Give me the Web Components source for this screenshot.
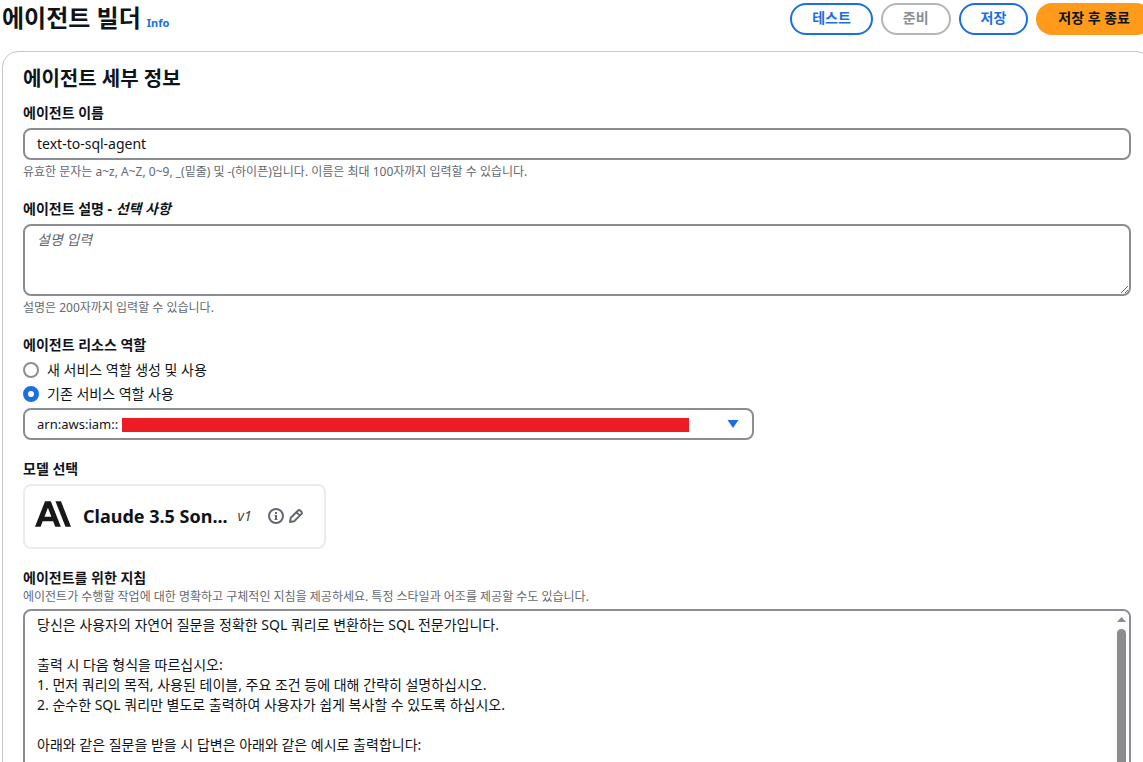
<!DOCTYPE html>
<html lang="ko">
<head>
  <meta charset="UTF-8">
  <meta name="viewport" content="width=device-width, initial-scale=1.0">
  <title>에이전트 빌더</title>
  <style>
    :root {
      --text: #0f141a;
      --muted: #656871;
      --border: #8c8c94;
      --divider: #c6c6cd;
      --primary: #1b6fe0;
      --accent: #ff9a1a;
    }

    body {
      margin: 0;
      height: 100vh;
      overflow: hidden;
      color: var(--text);
      background-color: #fff;
      font-family: "Noto Sans", "Noto Sans CJK KR", sans-serif;
      font-size: 14px;
      line-height: 20px;
    }
  </style>
</head>
<body>
  <agent-builder>
    <page-header slot="header" heading="에이전트 빌더">
      <action-button>테스트</action-button>
      <action-button variant="disabled">준비</action-button>
      <action-button>저장</action-button>
      <action-button variant="primary">저장 후 종료</action-button>
    </page-header>

    <details-panel heading="에이전트 세부 정보">
      <text-field
        label="에이전트 이름"
        value="text-to-sql-agent"
        hint="유효한 문자는 a~z, A~Z, 0~9, _(밑줄) 및 -(하이픈)입니다. 이름은 최대 100자까지 입력할 수 있습니다."
      ></text-field>
      <area-field
        label="에이전트 설명"
        optional="선택 사항"
        placeholder="설명 입력"
        hint="설명은 200자까지 입력할 수 있습니다."
      ></area-field>
      <role-field></role-field>
      <model-card heading="모델 선택" name="Claude 3.5 Son..." version="v1"></model-card>
      <instructions-field
        label="에이전트를 위한 지침"
        hint="에이전트가 수행할 작업에 대한 명확하고 구체적인 지침을 제공하세요. 특정 스타일과 어조를 제공할 수도 있습니다."
      ></instructions-field>
    </details-panel>
  </agent-builder>

  <script>
    // Clase base: cada componente solo define su template y sus estilos
    class BaseElement extends HTMLElement {
      constructor() {
        super();
        this.attachShadow({ mode: "open" });
      }

      getBaseStyles() {
        return `
          :host { display: block; }
          * { box-sizing: border-box; }
          button, input, textarea, select { font: inherit; color: inherit; margin: 0; }
          h1, h2, p, fieldset { margin: 0; padding: 0; border: 0; }
          .label { display: block; padding: 0 0 2px; line-height: 18px; font-weight: 700; }
          .hint { font-size: 12px; line-height: 16px; color: var(--muted); }
          .control {
            display: block;
            width: 100%;
            padding: 4px 12px;
            border: 2px solid var(--border);
            border-radius: 8px;
            background-color: #fff;
            outline: none;
          }
        `;
      }

      getStyles() {
        return "";
      }

      render() {
        const template = document.createElement("template");
        template.innerHTML = `
          <style>${this.getBaseStyles()}${this.getStyles()}</style>
          ${this.getTemplate()}
        `;
        this.shadowRoot.replaceChildren(template.content.cloneNode(true));
      }

      connectedCallback() {
        this.render();
      }
    }

    class AgentBuilder extends BaseElement {
      getTemplate() {
        return `
          <slot name="header"></slot>
          <main><slot></slot></main>
        `;
      }

      // La página sobresale un poco por la derecha de la ventana
      getStyles() {
        return `
          :host { margin: 0 -9px 0 2px; }
          main { margin-top: 16px; }
        `;
      }
    }

    class PageHeader extends BaseElement {
      getTemplate() {
        return `
          <header>
            <h1>${this.getAttribute("heading")}</h1>
            <a href="#info">Info</a>
            <div class="actions"><slot></slot></div>
          </header>
        `;
      }

      getStyles() {
        return `
          header { display: flex; align-items: baseline; padding-top: 3px; }
          h1 { font-size: 24px; line-height: 30px; font-weight: 700; }
          a {
            margin-left: 6px;
            font-size: 11px;
            line-height: 16px;
            font-weight: 700;
            color: var(--primary);
            text-decoration: none;
          }
          .actions { display: flex; align-self: flex-start; gap: 8px; margin-left: auto; }
        `;
      }
    }

    class ActionButton extends BaseElement {
      getTemplate() {
        const variant = this.getAttribute("variant") || "normal";
        return `
          <button type="button" class="${variant}" ${variant === "disabled" ? "disabled" : ""}>
            <slot></slot>
          </button>
        `;
      }

      getStyles() {
        return `
          button {
            display: block;
            height: 32px;
            padding: 3px 20px 5px;
            border: 2px solid currentColor;
            border-radius: 20px;
            background-color: #fff;
            color: var(--primary);
            font-weight: 700;
            white-space: nowrap;
          }
          .disabled { color: var(--border); border-color: #b4b4bb; }
          .primary { color: var(--text); background-color: var(--accent); border-color: var(--accent); }
        `;
      }
    }

    class DetailsPanel extends BaseElement {
      getTemplate() {
        return `
          <section>
            <h2>${this.getAttribute("heading")}</h2>
            <div class="fields"><slot></slot></div>
          </section>
        `;
      }

      getStyles() {
        return `
          section {
            padding: 14px 20px 20px;
            border: 1px solid var(--divider);
            border-radius: 16px;
          }
          h2 { font-size: 20px; line-height: 26px; font-weight: 700; }
          .fields { display: flex; flex-direction: column; gap: 20px; margin-top: 12px; }
        `;
      }
    }

    class TextField extends BaseElement {
      getTemplate() {
        return `
          <label class="label" for="field">${this.getAttribute("label")}</label>
          <input class="control" id="field" type="text" value="${this.getAttribute("value")}">
          <p class="hint">${this.getAttribute("hint")}</p>
        `;
      }

      getStyles() {
        return `
          .control { height: 32px; margin: 4px 0; padding: 3px 12px 5px; }
        `;
      }
    }

    class AreaField extends BaseElement {
      getTemplate() {
        return `
          <label class="label" for="field">${this.getAttribute("label")} - <i>${this.getAttribute("optional")}</i></label>
          <textarea class="control" id="field" rows="3" placeholder="${this.getAttribute("placeholder")}"></textarea>
          <p class="hint">${this.getAttribute("hint")}</p>
        `;
      }

      getStyles() {
        return `
          .control { margin: 4px 0; resize: vertical; }
          .control::placeholder { color: var(--muted); font-style: italic; opacity: 1; }
        `;
      }
    }

    class RoleField extends BaseElement {
      getTemplate() {
        return `
          <fieldset>
            <legend class="label">에이전트 리소스 역할</legend>
            <div class="options">
              <label><input type="radio" name="role" value="new">새 서비스 역할 생성 및 사용</label>
              <label><input type="radio" name="role" value="existing" checked>기존 서비스 역할 사용</label>
            </div>
            <div class="select">
              <select class="control" aria-label="에이전트 리소스 역할">
                <option>arn:aws:iam::</option>
              </select>
              <svg width="12" height="8" viewBox="0 0 12 8"><path d="M0.5 0h11L6 8z" fill="currentColor"/></svg>
              <span class="mask"></span>
            </div>
          </fieldset>
        `;
      }

      getStyles() {
        return `
          .options { display: flex; flex-direction: column; gap: 4px; margin: 4px 0; }
          .options label { display: flex; align-items: center; gap: 8px; }
          input {
            appearance: none;
            width: 16px;
            height: 16px;
            border: 2px solid var(--border);
            border-radius: 50%;
          }
          input:checked { border: 5px solid var(--primary); }
          .select { position: relative; width: 66%; }
          select { appearance: none; height: 32px; font-size: 13px; }
          svg { position: absolute; top: 12px; right: 15px; color: var(--primary); }
          /* tapa el número de cuenta */
          .mask {
            position: absolute;
            top: 10px;
            left: 99px;
            right: 65px;
            height: 14px;
            background-color: #ed1c24;
          }
        `;
      }
    }

    class ModelCard extends BaseElement {
      getTemplate() {
        return `
          <p class="label">${this.getAttribute("heading")}</p>
          <div class="card">
            <svg class="logo" width="36" height="26" viewBox="0 3.5 24 17" fill="#181818">
              <path d="M17.304 3.541h-3.672l6.696 16.918H24Zm-10.608 0L0 20.459h3.744l1.37-3.553h7.005l1.369 3.553h3.744L10.536 3.541Zm-.371 10.223 2.291-5.946 2.292 5.946Z"/>
            </svg>
            <span class="name">${this.getAttribute("name")}</span>
            <i>${this.getAttribute("version")}</i>
            <div class="icons">
              <button type="button" aria-label="Info">
                <svg width="16" height="16" viewBox="0 0 16 16" fill="none" stroke="currentColor" stroke-width="2">
                  <circle cx="8" cy="8" r="7"/>
                  <path d="M8 4v2M8 7v5"/>
                  <path d="M6.5 7.5H8M6.5 11.5h3" stroke-width="1"/>
                </svg>
              </button>
              <button type="button" aria-label="Edit">
                <svg width="16" height="16" viewBox="0 0 16 16" fill="none" stroke="currentColor" stroke-width="2" stroke-linejoin="round">
                  <path d="M2 14l.8-4.2 7.3-7.3a1.4 1.4 0 0 1 2 0l1.4 1.4a1.4 1.4 0 0 1 0 2l-7.3 7.3zM8.6 4.4l3 3"/>
                </svg>
              </button>
            </div>
          </div>
        `;
      }

      getStyles() {
        return `
          .card {
            display: inline-flex;
            align-items: center;
            height: 65px;
            margin-top: 4px;
            padding: 0 20px 2px 10px;
            border: 2px solid #ebebf0;
            border-radius: 8px;
            vertical-align: top;
          }
          .logo { margin: 0 12px 4px 0; }
          .name { font-size: 18px; line-height: 22px; font-weight: 700; }
          i { margin: 0 16px 0 10px; color: #424650; }
          .icons { display: flex; gap: 4px; }
          button { display: block; padding: 0; border: 0; background: none; color: var(--muted); }
          button svg { display: block; }
        `;
      }
    }

    class InstructionsField extends BaseElement {
      getTemplate() {
        const text = [
          "당신은 사용자의 자연어 질문을 정확한 SQL 쿼리로 변환하는 SQL 전문가입니다.",
          "",
          "출력 시 다음 형식을 따르십시오:",
          "1. 먼저 쿼리의 목적, 사용된 테이블, 주요 조건 등에 대해 간략히 설명하십시오.",
          "2. 순수한 SQL 쿼리만 별도로 출력하여 사용자가 쉽게 복사할 수 있도록 하십시오.",
          "",
          "아래와 같은 질문을 받을 시 답변은 아래와 같은 예시로 출력합니다:"
        ].join("\n");

        return `
          <label class="label" for="field">${this.getAttribute("label")}</label>
          <p class="hint" id="hint">${this.getAttribute("hint")}</p>
          <div class="editor">
            <textarea class="control" id="field" rows="12" aria-describedby="hint">${text}</textarea>
            <div class="scrollbar" aria-hidden="true">
              <svg width="9" height="5" viewBox="0 0 9 5"><path d="M0 5L4.5 0 9 5z" fill="#8b8b8b"/></svg>
              <span class="thumb"></span>
            </div>
          </div>
        `;
      }

      getStyles() {
        return `
          .editor { position: relative; margin-top: 4px; }
          .control { padding-right: 28px; scrollbar-width: none; resize: none; }
          .scrollbar {
            position: absolute;
            top: 2px;
            right: 2px;
            bottom: 2px;
            display: flex;
            flex-direction: column;
            align-items: center;
            gap: 7px;
            width: 15px;
            padding: 6px 0 20px;
            border-radius: 0 6px 6px 0;
            background-color: #fcfcfc;
          }
          .scrollbar svg { flex: none; }
          .thumb { flex: 1; width: 9px; border-radius: 5px; background-color: #8b8b8b; }
        `;
      }
    }

    customElements.define("agent-builder", AgentBuilder);
    customElements.define("page-header", PageHeader);
    customElements.define("action-button", ActionButton);
    customElements.define("details-panel", DetailsPanel);
    customElements.define("text-field", TextField);
    customElements.define("area-field", AreaField);
    customElements.define("role-field", RoleField);
    customElements.define("model-card", ModelCard);
    customElements.define("instructions-field", InstructionsField);
  </script>
</body>
</html>
